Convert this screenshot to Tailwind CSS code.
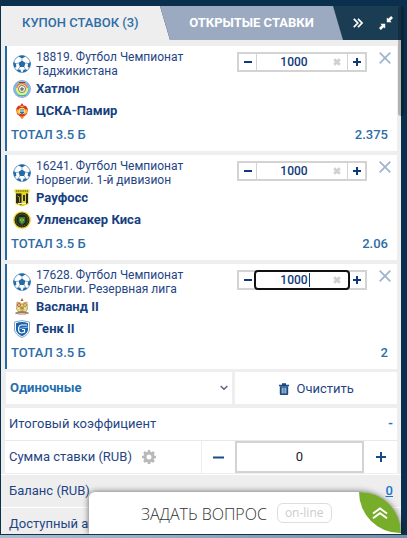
<!DOCTYPE html>
<html lang="ru">
<head>
<meta charset="utf-8">
<meta name="viewport" content="width=device-width, initial-scale=1">
<title>Купон ставок</title>
<script src="https://cdn.jsdelivr.net/npm/@tailwindcss/browser@4"></script>
</head>
<body class="relative flex h-screen flex-col overflow-hidden bg-[#0b304d] pl-px pr-1.5 pt-1.5 font-['Roboto','Liberation_Sans',sans-serif] text-[#1f4585]">

<svg class="hidden" aria-hidden="true">
  <symbol id="ball" viewBox="0 0 18 18">
    <circle cx="9" cy="9" r="8.4" fill="#fff" stroke="#5b93c2" stroke-width=".9"/>
    <g fill="#246aa5">
      <path d="M9 5.500l3.500 2.500-1.300 4H6.800l-1.300-4z"/>
      <path d="M5.400 1.400C7.600.2 10.400.2 12.600 1.400L9 3.400z"/>
      <path d="M.5 6.900l2.500 1.700.3 3.400-1.600.8C.6 11 .2 8.800.5 6.900z"/>
      <path d="M17.500 6.900L15 8.600l-.3 3.400 1.600.8c1.100-1.800 1.500-4 1.200-5.900z"/>
      <path d="M5 14.200l2.500.6.7 2.500c-1.700-.1-3.300-.8-4.400-1.900z"/>
      <path d="M13 14.200l-2.500.6-.7 2.500c1.700-.1 3.300-.8 4.400-1.900z"/>
    </g>
    <path d="M9 3.400v2.200M5.500 8L3 8.600M12.500 8l2.500.6M6.800 12l-1.500 2.300M11.200 12l1.500 2.300" stroke="#5b93c2" stroke-width=".7"/>
  </symbol>
  <symbol id="close" viewBox="0 0 12 12"><path d="M.7.7l10.600 10.600M11.300.7L.7 11.300" stroke="#9fb3cf" stroke-width="1.700"/></symbol>
  <symbol id="clear" viewBox="0 0 8 8"><path d="M1.200 1.200l5.600 5.600M6.800 1.200L1.200 6.800" stroke="#d0d0d0" stroke-width="2.800"/></symbol>
  <symbol id="minus" viewBox="0 0 8 8"><path d="M0 4h8" stroke="#0e3a7c" stroke-width="2"/></symbol>
  <symbol id="plus" viewBox="0 0 8 8"><path d="M0 4h8M4 0v8" stroke="#0e3a7c" stroke-width="2"/></symbol>
</svg>

<header class="flex h-[34px] shrink-0 bg-[#1b3d54] text-[13px] font-medium">
  <nav class="flex min-w-0 flex-1">
    <button class="-mr-2.5 h-full w-[169px] bg-[#eee] pl-[21px] text-left text-[#2d6da8] [clip-path:polygon(0_0,159px_0,100%_100%,0_100%)]">КУПОН СТАВОК (3)</button>
    <button class="h-full w-[183px] bg-[#9ba9c1] font-bold text-white [clip-path:polygon(0_0,173px_0,100%_100%,10px_100%)]">ОТКРЫТЫЕ СТАВКИ</button>
  </nav>
  <div class="flex items-center gap-4 pr-2">
    <button aria-label="Далее"><svg class="h-2.5 w-2.5" viewBox="0 0 10 10" fill="none" stroke="#fff" stroke-width="1.700"><path d="M.8.800L4.800 5l-4 4.200M5 .8L9 5 5 9.200"/></svg></button>
    <button aria-label="Свернуть"><svg class="h-3.5 w-3.5" viewBox="0 0 14 14" fill="#fff"><path d="M7.800 1.400v4.800h4.800l-1.400-1.500L14 1.900 12.100 0 9.300 2.800zM6.200 12.600V7.800H1.400l1.400 1.500L0 12.100 1.900 14l2.800-2.800z"/></svg></button>
  </div>
</header>

<main class="flex flex-1 flex-col bg-[#eee]">
  <div class="flex flex-col gap-1 px-1 pt-1.5">

    <article class="border-l-2 border-[#246aa5] bg-white pb-[5px] pl-1 pr-[9px] pt-1">
      <div class="flex items-start">
        <svg class="mt-[5px] h-[18px] w-[18px] shrink-0 ml-0.5"><use href="#ball"/></svg>
        <p class="ml-[5px] min-w-0 flex-1 text-xs leading-[14px]">18819. Футбол Чемпионат<br>Таджикистана</p>
        <div class="mt-0.5 flex h-5 w-[130px] border-2 border-[#d3d3d3]">
          <button class="grid w-[17px] place-items-center" aria-label="Меньше"><svg class="h-2 w-2"><use href="#minus"/></svg></button>
          <div class="relative flex flex-1 items-center border-x border-[#d3d3d3]">
            <input aria-label="Ставка на Хатлон — ЦСКА-Памир" value="1000" class="h-full w-full pr-4 text-center text-xs font-medium text-[#103a7a] outline-none">
            <button class="absolute right-1.5" aria-label="Стереть"><svg class="h-2 w-2"><use href="#clear"/></svg></button>
          </div>
          <button class="grid w-[17px] place-items-center" aria-label="Больше"><svg class="h-2 w-2"><use href="#plus"/></svg></button>
        </div>
        <button class="-mr-[3px] ml-3 mt-0.5" aria-label="Удалить"><svg class="h-3 w-3"><use href="#close"/></svg></button>
      </div>
      <div class="flex h-[22px] items-center gap-[5px] pl-0.5 text-[13px] font-bold text-[#173f80]">
        <svg class="h-[18px] w-[18px]" viewBox="0 0 18 18" fill="none"><circle cx="9" cy="9" r="8.300" fill="#e8f27a" stroke="#a596e8" stroke-width="1.200"/><circle cx="9" cy="9" r="7" stroke="#55c4e0" stroke-width="1.600"/><path d="M3.600 8a5.500 5.500 0 0110.800 0" stroke="#ef7568" stroke-width="1.400"/><circle cx="9" cy="9" r="3.500" fill="#fff" stroke="#555" stroke-width=".8"/><path d="M9 7l2 1.500-.8 2.200H7.800L7 8.500z" fill="#777"/><path d="M6 2.500h6" stroke="#6b5532"/><path d="M5 15.500h8" stroke="#35bfa0"/></svg>
        <span>Хатлон</span>
      </div>
      <div class="flex h-[22px] items-center gap-[5px] pl-0.5 text-[13px] font-bold text-[#173f80]">
        <svg class="h-[18px] w-[18px]" viewBox="0 0 18 18"><path d="M9 1l1.500 2.500L13 4l2 3-1 5-3 2.500L9 17l-2-2.500L4 12 3 7l2-3 2.500-.5z" fill="#dc3428"/><path d="M3.500 7l3 1v5L4 11zM14.500 7l-3 1v5l2.500-2z" fill="#f2bb2e"/><circle cx="9" cy="9" r="3.300" fill="#f7e36a"/><path d="M7 7.500h4v3L9 12.500l-2-2z" fill="#356eb5"/><path d="M7 9h4" stroke="#fff"/><path d="M7.500 4.500h3M7 15h4" stroke="#f5c438"/></svg>
        <span>ЦСКА-Памир</span>
      </div>
      <div class="mt-0.5 flex h-[22px] items-center justify-between text-[13px] font-medium text-[#2d6da8]"><span>ТОТАЛ 3.5 Б</span><span>2.375</span></div>
    </article>

    <article class="border-l-2 border-[#246aa5] bg-white pb-[5px] pl-1 pr-[9px] pt-1">
      <div class="flex items-start">
        <svg class="mt-[5px] h-[18px] w-[18px] shrink-0 ml-0.5"><use href="#ball"/></svg>
        <p class="ml-[5px] min-w-0 flex-1 text-xs leading-[14px]">16241. Футбол Чемпионат<br>Норвегии. 1-й дивизион</p>
        <div class="mt-0.5 flex h-5 w-[130px] border-2 border-[#d3d3d3]">
          <button class="grid w-[17px] place-items-center" aria-label="Меньше"><svg class="h-2 w-2"><use href="#minus"/></svg></button>
          <div class="relative flex flex-1 items-center border-x border-[#d3d3d3]">
            <input aria-label="Ставка на Рауфосс — Улленсакер Киса" value="1000" class="h-full w-full pr-4 text-center text-xs font-medium text-[#103a7a] outline-none">
            <button class="absolute right-1.5" aria-label="Стереть"><svg class="h-2 w-2"><use href="#clear"/></svg></button>
          </div>
          <button class="grid w-[17px] place-items-center" aria-label="Больше"><svg class="h-2 w-2"><use href="#plus"/></svg></button>
        </div>
        <button class="-mr-[3px] ml-3 mt-0.5" aria-label="Удалить"><svg class="h-3 w-3"><use href="#close"/></svg></button>
      </div>
      <div class="flex h-[22px] items-center gap-[5px] pl-0.5 text-[13px] font-bold text-[#173f80]">
        <svg class="h-[18px] w-[18px]" viewBox="0 0 18 18"><path d="M1.500.5h15v3h-1V15L9 17.500 2.500 15V3.500h-1z" fill="#e5d51e"/><path d="M3 4.500h5.500V16L3 14zM13 4.500h2V14l-2 1z" fill="#29291d"/><path d="M3 2h12" stroke="#4d4a12" stroke-width="1.200" stroke-dasharray="1.200 .6"/><path d="M10 6h2v6h-2z" fill="#34331c"/><path d="M4.500 7l2 1v5" stroke="#a99e27" fill="none"/><path d="M5 14.500h8" stroke="#eee" stroke-width="1.200"/></svg>
        <span>Рауфосс</span>
      </div>
      <div class="flex h-[22px] items-center gap-[5px] pl-0.5 text-[13px] font-bold text-[#173f80]">
        <svg class="h-[18px] w-[18px]" viewBox="0 0 18 18" fill="none"><circle cx="9" cy="9" r="8.800" fill="#edce27"/><circle cx="9" cy="9" r="7.500" fill="#1e2718"/><circle cx="9" cy="9" r="6" stroke="#867a28" stroke-width="1" stroke-dasharray="1 1"/><path d="M5.800 6h6.400v5L9 14l-3.200-3z" fill="#30793a"/><path d="M9 7v5M7.500 8v2M10.500 8v2" stroke="#c7c63b" stroke-width=".8"/></svg>
        <span>Улленсакер Киса</span>
      </div>
      <div class="mt-0.5 flex h-[22px] items-center justify-between text-[13px] font-medium text-[#2d6da8]"><span>ТОТАЛ 3.5 Б</span><span>2.06</span></div>
    </article>

    <article class="border-l-2 border-[#246aa5] bg-white pb-[5px] pl-1 pr-[9px] pt-1">
      <div class="flex items-start">
        <svg class="mt-[5px] h-[18px] w-[18px] shrink-0 ml-0.5"><use href="#ball"/></svg>
        <p class="ml-[5px] min-w-0 flex-1 text-xs leading-[14px]">17628. Футбол Чемпионат<br>Бельгии. Резервная лига</p>
        <div class="mt-0.5 flex h-5 w-[130px] border-2 border-[#d3d3d3]">
          <button class="grid w-[17px] place-items-center" aria-label="Меньше"><svg class="h-2 w-2"><use href="#minus"/></svg></button>
          <div class="relative flex flex-1 items-center rounded-xs bg-white px-px outline-2 outline-[#101010]">
            <input aria-label="Ставка на Васланд II — Генк II" value="1000" class="h-full w-full pr-4 text-center text-xs font-medium text-[#103a7a] outline-none">
            <span class="absolute left-[53px] h-3.5 w-px bg-[#103a7a]"></span>
            <button class="absolute right-[7px]" aria-label="Стереть"><svg class="h-2 w-2"><use href="#clear"/></svg></button>
          </div>
          <button class="grid w-[17px] place-items-center" aria-label="Больше"><svg class="h-2 w-2"><use href="#plus"/></svg></button>
        </div>
        <button class="-mr-[3px] ml-3 mt-0.5" aria-label="Удалить"><svg class="h-3 w-3"><use href="#close"/></svg></button>
      </div>
      <div class="flex h-[22px] items-center gap-[5px] pl-0.5 text-[13px] font-bold text-[#173f80]">
        <svg class="h-[18px] w-[18px]" viewBox="0 0 18 18" fill="none"><path d="M9 0l1.500 3h-3z" fill="#cf4b32"/><path d="M4 4l4 1 1 2 1-2 4-1 .5 7-2 3h-7l-2-3z" fill="#e6d7a0" stroke="#b59b54" stroke-width=".8"/><circle cx="6" cy="7" r="1.500" stroke="#c05844"/><circle cx="12" cy="7" r="1.500" stroke="#b78b3b"/><path d="M7 8h4v4l-2 2-2-2z" fill="#d7b53a"/><path d="M7.500 10h3" stroke="#5a7a4d"/><path d="M2.500 15.500q6.500-3 13 0" stroke="#8b8460" stroke-width="1.800"/><path d="M5 16h8" stroke="#c94a3a" stroke-width=".8"/></svg>
        <span>Васланд II</span>
      </div>
      <div class="flex h-[22px] items-center gap-[5px] pl-0.5 text-[13px] font-bold text-[#173f80]">
        <svg class="h-[18px] w-[18px]" viewBox="0 0 18 18" fill="none"><path d="M1.500 2Q9-.8 16.500 2v8q-1 5-7.500 7.500Q2.500 15 1.500 10z" fill="#fff" stroke="#7da9d4"/><path d="M3 3.200Q9 1 15 3.200V10q-1 4-6 6.200Q4 14 3 10z" fill="#1b62aa"/><path d="M14 5H8.500Q5.500 5.500 5.500 9t3 4l3-1V9.500H9" stroke="#fff" stroke-width="1.200"/><path d="M6.500 8.500L15 7" stroke="#8fc0e8"/></svg>
        <span>Генк II</span>
      </div>
      <div class="mt-0.5 flex h-[22px] items-center justify-between text-[13px] font-medium text-[#2d6da8]"><span>ТОТАЛ 3.5 Б</span><span>2</span></div>
    </article>
  </div>

  <div class="mt-[3px] flex h-8 shrink-0 gap-[3px] pl-[5px] pr-1 text-[13px]">
    <label class="relative flex flex-[227] items-center bg-white">
      <select aria-label="Тип ставки" class="h-full w-full appearance-none pl-1 font-bold text-[#246fae] outline-none"><option>Одиночные</option></select>
      <svg class="pointer-events-none absolute right-1 h-2 w-2" viewBox="0 0 8 8" fill="none" stroke="#51617d" stroke-width="1.300"><path d="M.700 2L4 5.300 7.300 2"/></svg>
    </label>
    <button class="flex flex-[162] items-center justify-center gap-2 bg-white pt-0.5">
      <svg class="h-3 w-2.5" viewBox="0 0 10 12"><path d="M3 .3h4v1.500h3v1.500H0V1.800h3z" fill="#174b85"/><path d="M.8 3.300h8.400V11q0 1-1 1H1.800q-1 0-1-1z" fill="#174b85"/><path d="M3.200 4.500v6M5 4.500v6M6.800 4.500v6" stroke="#fff" stroke-width=".8"/></svg>
      <span>Очистить</span>
    </button>
  </div>

  <div class="mx-1 mt-1 flex h-[33px] shrink-0 items-center justify-between border-b border-[#e9e9e9] bg-white px-1 text-[13px]"><span>Итоговый коэффициент</span><span class="font-bold text-[#1677d0]">-</span></div>
  <div class="mx-1 flex h-8 shrink-0 bg-white text-[13px]">
    <label for="sum" class="flex flex-1 items-center gap-2.5 border-r border-[#eee] pl-1">Сумма ставки (RUB)
      <svg class="h-3.5 w-3.5" viewBox="0 0 14 14"><circle cx="7" cy="7" r="4" fill="none" stroke="#b9b9b9" stroke-width="3"/><path d="M7 0v3M7 11v3M0 7h3M11 7h3M2 2l2.200 2.200M9.800 9.800L12 12M2 12l2.200-2.200M9.800 4.200L12 2" stroke="#b9b9b9" stroke-width="2.600"/></svg>
    </label>
    <button class="grid w-[33px] place-items-center" aria-label="Уменьшить сумму"><svg class="h-[11px] w-[11px]" viewBox="0 0 11 11"><path d="M0 5.500h11" stroke="#174b85" stroke-width="2"/></svg></button>
    <input id="sum" value="0" class="w-[129px] border-2 border-[#d3d3d3] text-center text-[13px] text-[#222] outline-none">
    <button class="grid w-[33px] place-items-center" aria-label="Увеличить сумму"><svg class="h-2.5 w-2.5" viewBox="0 0 10 10"><path d="M0 5h10M5 0v10" stroke="#174b85" stroke-width="2"/></svg></button>
  </div>
  <div class="mt-px flex h-[34px] shrink-0 items-center justify-between border-y border-white px-2 text-[13px]"><span>Баланс (RUB)</span><a href="#" class="font-medium text-[#1677d0] underline">0</a></div>
  <div class="flex h-8 shrink-0 items-center pl-2 text-[13px]">Доступный аванс</div>
</main>

<div class="absolute right-[3px] top-1.5 h-[110px] w-1.5 rounded-full bg-black/25"></div>

<aside class="absolute bottom-1 left-[89px] right-1.5 flex h-[42px] items-center rounded-tl-md rounded-tr-[42px] bg-white pl-[52px] shadow-[0_0_6px_rgba(0,0,0,0.6)]">
  <span class="pt-0.5 font-['Open_Sans','Roboto',sans-serif] text-base font-light text-[#333]">ЗАДАТЬ ВОПРОС</span>
  <span class="ml-2.5 rounded-md border border-[#ddd] px-[7px] font-['Open_Sans','Roboto',sans-serif] text-xs leading-[18px] text-[#ccc]">on-line</span>
  <button aria-label="Развернуть" class="absolute right-0 top-0 grid h-[41px] w-[42px] place-items-center rounded-bl-full rounded-tr-full bg-[#78ac2b]"><svg class="h-3 w-4" viewBox="0 0 16 12" fill="none" stroke="#fff" stroke-width="2"><path d="M1 6.500l7-5 7 5M1 11.200l7-5 7 5"/></svg></button>
</aside>
<footer class="absolute inset-x-0 bottom-0 h-1 border-t border-[#173147] bg-linear-to-r from-[#a8bfd0] to-[#7391a9]"></footer>
</body>
</html>
